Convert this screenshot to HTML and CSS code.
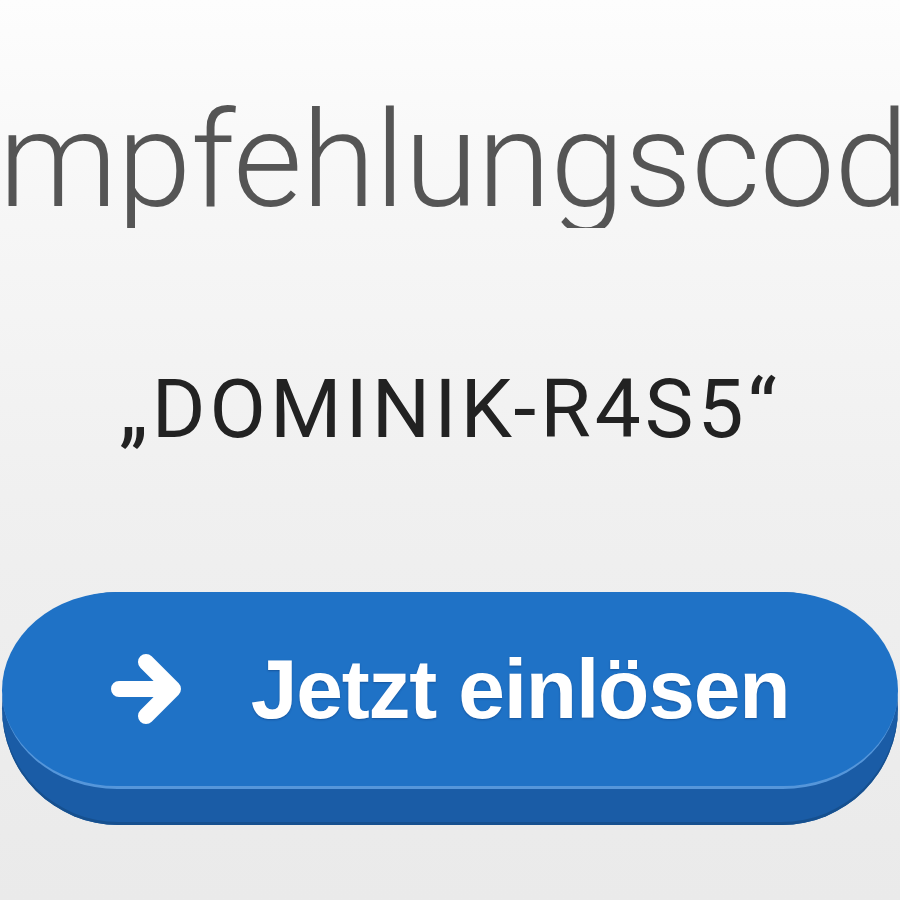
FILE: index.html
```html
<!DOCTYPE html>
<html lang="de">
<head>
<meta charset="utf-8">
<title>Empfehlungscode</title>
<link rel="stylesheet" href="styles.css">
</head>
<body>
<main class="page">
  <div class="title-row"><h1 class="title">Empfehlungscode</h1></div>
  <p class="code">„DOMINIK-R4S5“</p>
  <div class="btn-wrap">
    <a class="btn" href="#">
      <span class="btn-face">
        <svg class="arrow" width="72" height="72" viewBox="0 0 72 72" aria-hidden="true">
          <path d="M8 37 H60 M35 10 L62 37 L35 64" fill="none" stroke="#fff" stroke-width="16" stroke-linecap="round" stroke-linejoin="round"/>
        </svg>
        <span class="btn-label">Jetzt einlösen</span>
      </span>
    </a>
  </div>
</main>
</body>
</html>
```
FILE: styles.css
```css
html, body {
  margin: 0;
  padding: 0;
  height: 100%;
}
body {
  background: linear-gradient(to bottom, #fdfdfd 0%, #f6f6f6 25%, #f0f0f0 55%, #eaeaea 100%);
  font-family: Roboto, "Liberation Sans", sans-serif;
  overflow: hidden;
}
.page {
  width: 900px;
  height: 900px;
  display: flex;
  flex-direction: column;
}
.title-row {
  display: flex;
  justify-content: center;
  overflow: hidden;
  padding-top: 94px;
}
.title {
  margin: 0;
  flex: none;
  white-space: nowrap;
  font-family: Roboto, sans-serif;
  font-weight: 300;
  font-size: 134px;
  line-height: 1;
  color: #555555;
  letter-spacing: -0.6px;
}
.code {
  margin: 140px 0 0;
  text-align: center;
  font-family: Roboto, sans-serif;
  font-weight: 400;
  font-size: 82px;
  line-height: 1;
  color: #222222;
  letter-spacing: 4px;
}
.btn-wrap {
  margin-top: 142px;
  padding: 0 2px;
}
.btn {
  display: block;
  height: 233px;
  border-radius: 117px;
  background: #1a5ca6;
  box-shadow: inset 0 -3px 0 #16508f;
  text-decoration: none;
}
.btn-face {
  display: flex;
  align-items: center;
  justify-content: center;
  gap: 68px;
  height: 194px;
  border-radius: 117px / 100px;
  background: #1f72c6;
  border-bottom: 3px solid #5596da;
}
.arrow {
  flex: none;
  margin-top: -2px;
}
.btn-label {
  font-family: "Liberation Sans", Arial, sans-serif;
  font-weight: 700;
  font-size: 84px;
  line-height: 1;
  color: #ffffff;
  letter-spacing: -1.2px;
  text-shadow: 0 1px 2px rgba(0, 30, 80, 0.35);
}
```
